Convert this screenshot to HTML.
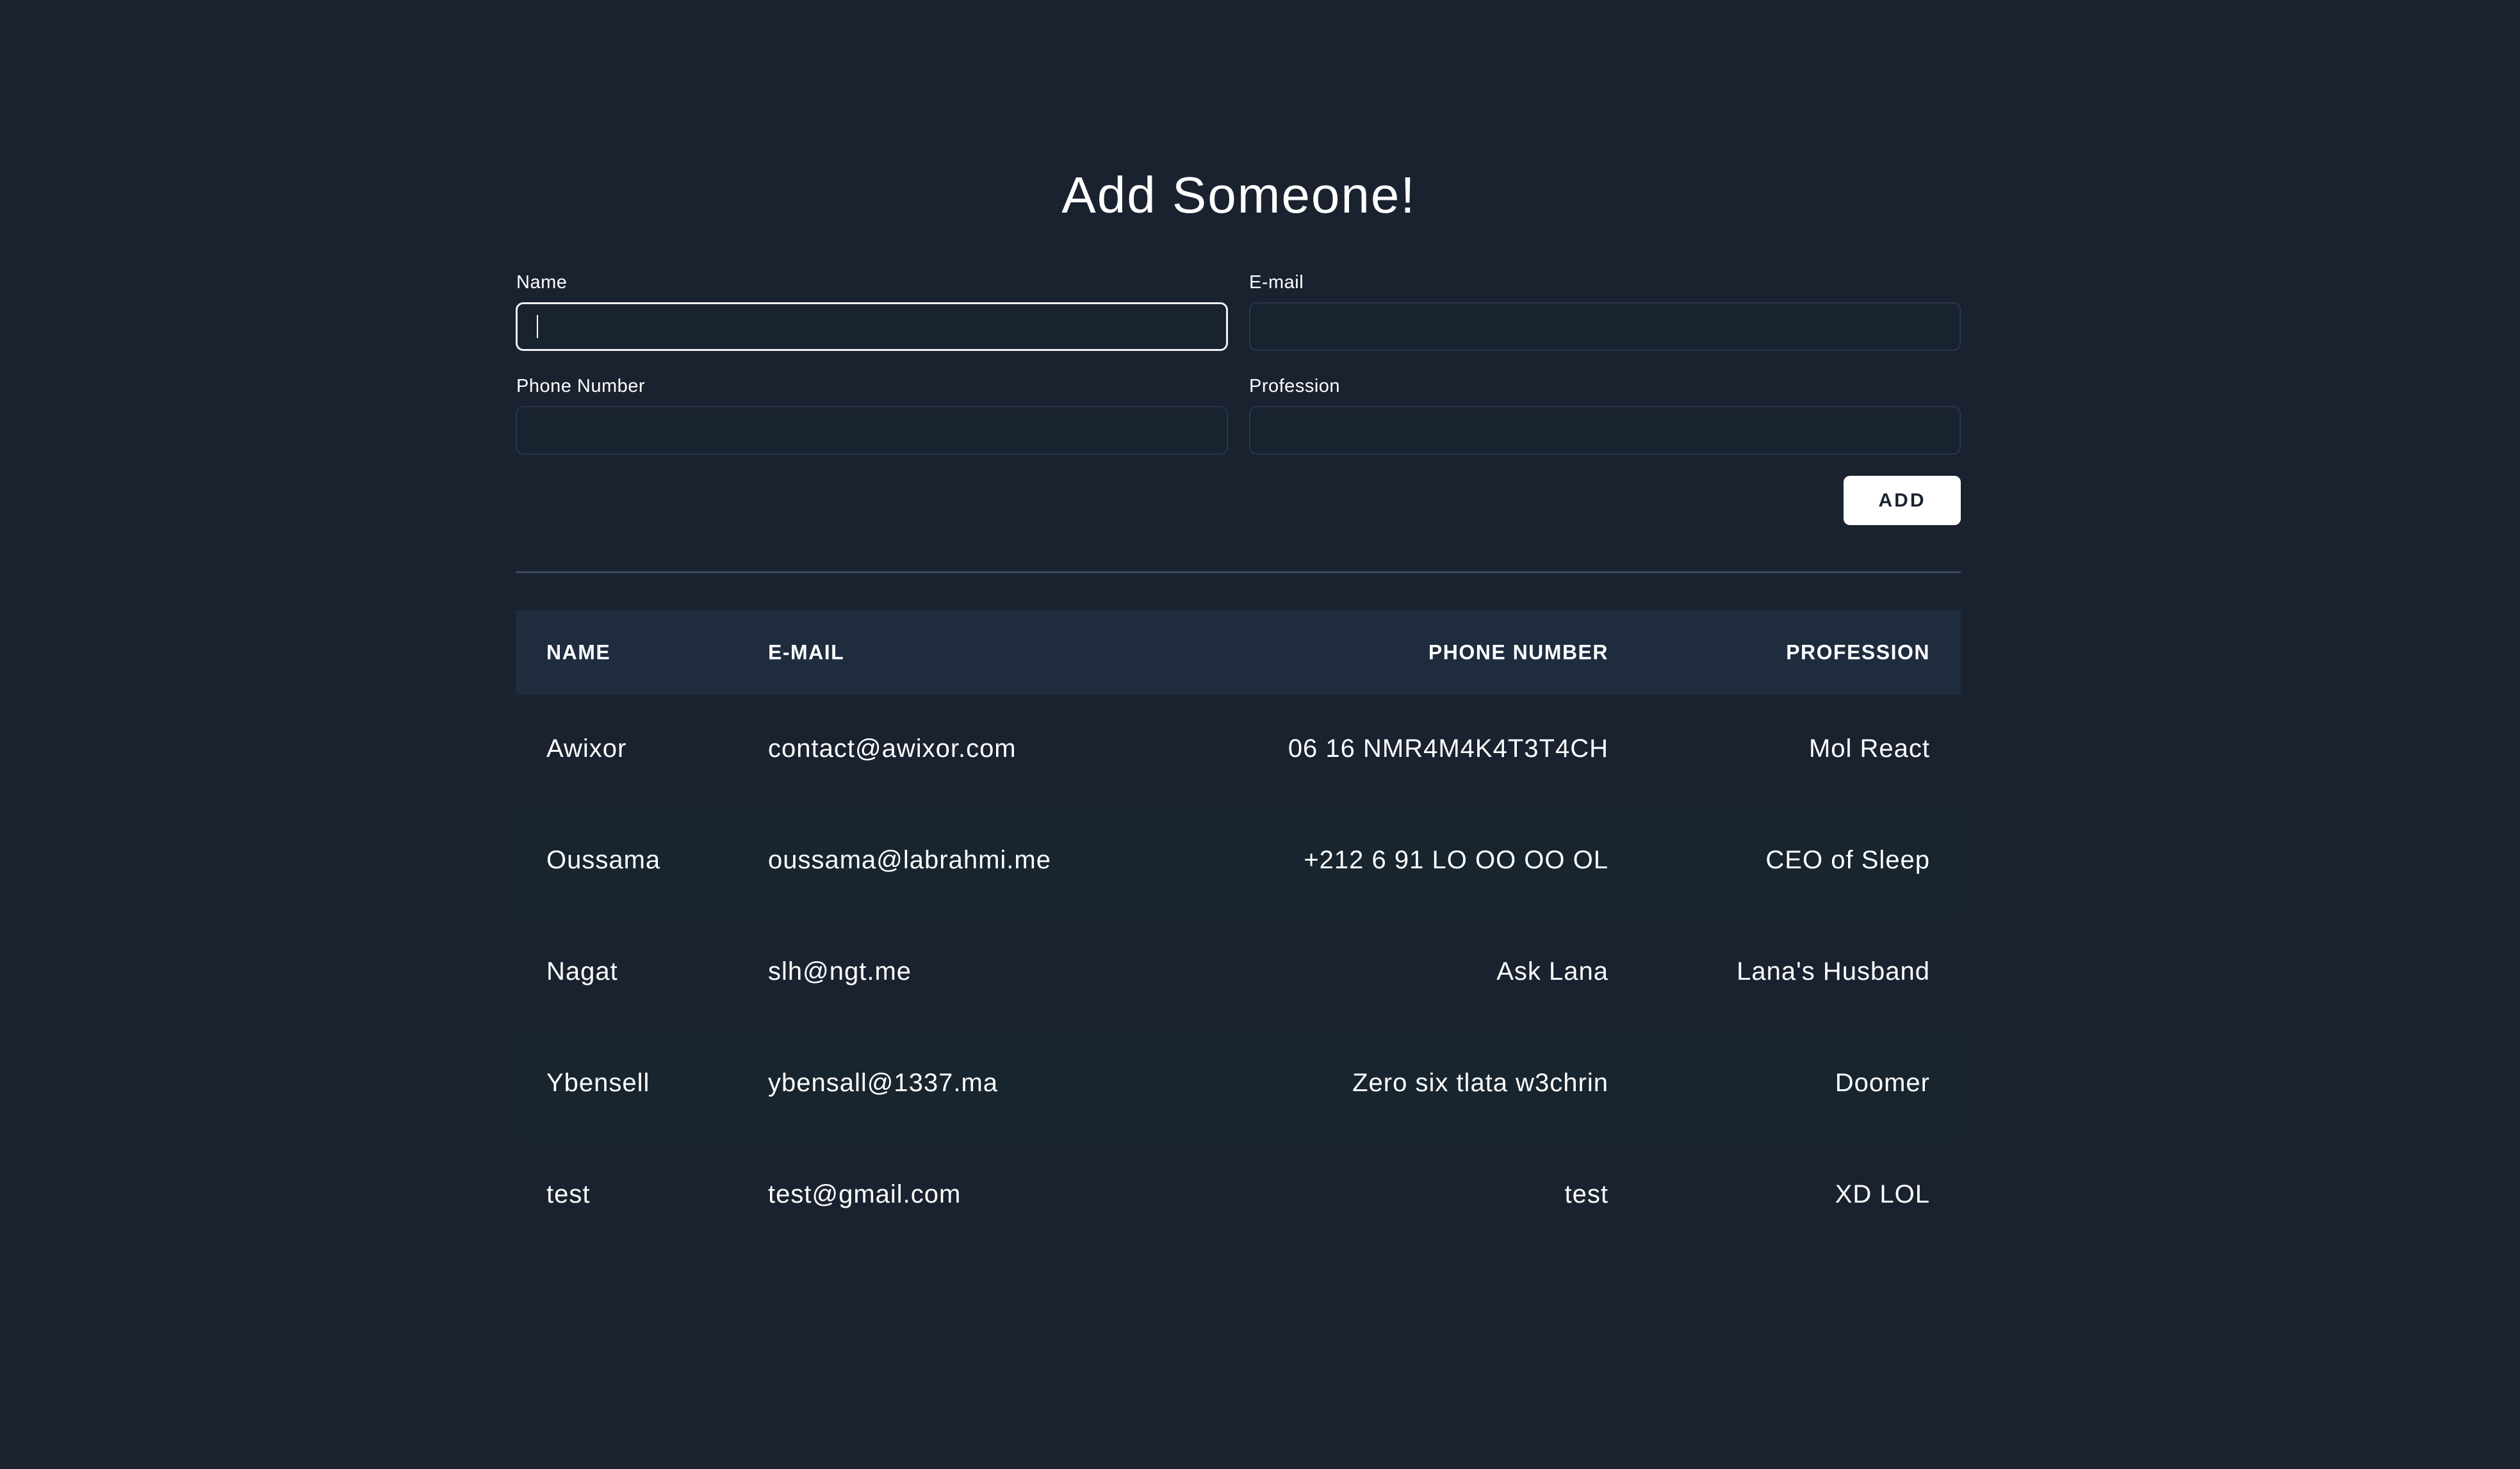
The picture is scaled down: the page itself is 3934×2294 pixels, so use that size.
<!DOCTYPE html>
<html><head><meta charset="utf-8"><style>
*{box-sizing:border-box;margin:0;padding:0}
body{width:3934px;height:2294px;background:#1a2230;font-family:"Liberation Sans",sans-serif;color:#fff;position:relative;overflow:hidden}
.abs{position:absolute}
h1{position:absolute;left:0;width:3868px;text-align:center;top:259px;font-size:80px;font-weight:400;letter-spacing:2px}
.lbl{position:absolute;font-size:29px;letter-spacing:0.5px}
.inp{position:absolute;height:76px;border:2px solid #26374a;border-radius:12px;background:#19232f}
.btn{position:absolute;left:2878px;top:743px;width:183px;height:77px;background:#fff;border-radius:10px;color:#1a2230;font-weight:700;font-size:30px;letter-spacing:3px;text-align:center;line-height:77px}
.hr{position:absolute;left:805px;top:892px;width:2256px;height:3px;background:#3b4a5c}
.row{position:absolute;left:805px;width:2256px;height:174px}
.row span{position:absolute;top:50%;transform:translateY(-56%);font-size:40px;letter-spacing:1px}
.c1{left:48px}.c2{left:394px}.c3{right:550px}.c4{right:48px}
.head span{font-size:32px;font-weight:700;letter-spacing:1.5px;transform:translateY(-50%)}
</style></head><body>
<h1>Add Someone!</h1>
<div class="lbl" style="left:806px;top:425px">Name</div>
<div class="lbl" style="left:1950px;top:425px">E-mail</div>
<div class="lbl" style="left:806px;top:587px">Phone Number</div>
<div class="lbl" style="left:1950px;top:587px">Profession</div>
<div class="inp" style="left:805px;top:472px;width:1112px;border:3px solid #f2f2f2"><div class="abs" style="left:30px;top:17px;width:2px;height:36px;background:#fff"></div></div>
<div class="inp" style="left:1950px;top:472px;width:1111px"></div>
<div class="inp" style="left:805px;top:634px;width:1112px"></div>
<div class="inp" style="left:1950px;top:634px;width:1111px"></div>
<div class="btn">ADD</div>
<div class="hr"></div>
<div class="row head" style="top:953px;height:132px;background:#1e2c3e"><span class="c1">NAME</span><span class="c2">E-MAIL</span><span class="c3">PHONE NUMBER</span><span class="c4">PROFESSION</span></div>
<div class="row" style="top:1085px"><span class="c1">Awixor</span><span class="c2">contact@awixor.com</span><span class="c3">06 16 NMR4M4K4T3T4CH</span><span class="c4">Mol React</span></div>
<div class="row" style="top:1259px;background:#18252f"><span class="c1">Oussama</span><span class="c2">oussama@labrahmi.me</span><span class="c3">+212 6 91 LO OO OO OL</span><span class="c4">CEO of Sleep</span></div>
<div class="row" style="top:1433px"><span class="c1">Nagat</span><span class="c2">slh@ngt.me</span><span class="c3">Ask Lana</span><span class="c4">Lana's Husband</span></div>
<div class="row" style="top:1607px;background:#18252f"><span class="c1">Ybensell</span><span class="c2">ybensall@1337.ma</span><span class="c3">Zero six tlata w3chrin</span><span class="c4">Doomer</span></div>
<div class="row" style="top:1781px"><span class="c1">test</span><span class="c2">test@gmail.com</span><span class="c3">test</span><span class="c4">XD LOL</span></div>
</body></html>
